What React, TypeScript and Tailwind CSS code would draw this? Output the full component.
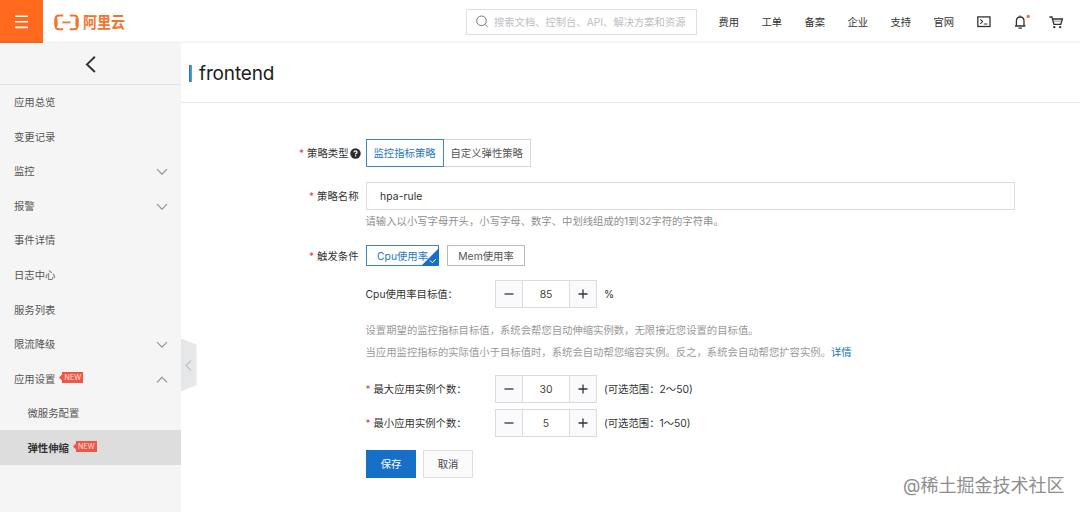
import React from "react";

const navLinks = ["费用", "工单", "备案", "企业", "支持", "官网"];

type Item = { label: string; arrow?: "up" | "down"; isNew?: boolean; child?: boolean; active?: boolean };

const menu: Item[] = [
  { label: "应用总览" },
  { label: "变更记录" },
  { label: "监控", arrow: "down" },
  { label: "报警", arrow: "down" },
  { label: "事件详情" },
  { label: "日志中心" },
  { label: "服务列表" },
  { label: "限流降级", arrow: "down" },
  { label: "应用设置", arrow: "up", isNew: true },
  { label: "微服务配置", child: true },
  { label: "弹性伸缩", child: true, active: true, isNew: true },
];

function Chevron({ dir }: { dir: "up" | "down" }) {
  return (
    <svg className="mt-[2px]" width="12" height="8" viewBox="0 0 12 8" fill="none" stroke="#8f8f8f" strokeWidth="1.1">
      <path d={dir === "down" ? "M1 1.2L6 6.2L11 1.2" : "M1 6.4L6 1.4L11 6.4"} />
    </svg>
  );
}

function NewBadge() {
  return (
    <span className="relative -top-[1px] ml-[4px] flex h-[11px] items-center">
      <svg width="3" height="11" viewBox="0 0 3 11">
        <path d="M3 2.5L0 5.5L3 8.5Z" fill="#ee5648" />
      </svg>
      <span className="flex h-[11px] w-[21px] items-center justify-center bg-[#ee5648] text-[7px] leading-none tracking-[0.1px] text-[#ffe3df]">
        NEW
      </span>
    </span>
  );
}

function Star() {
  return <span className="mr-[3px] text-[10px] text-[#e0405a]">*</span>;
}

function Stepper({ value }: { value: string }) {
  return (
    <div className="flex h-[28px] w-[102px] border border-[#dcdcde] text-[#333]">
      <button className="flex w-[27px] items-center justify-center border-r border-[#dcdcde] bg-[#faf9fb]">
        <svg width="10" height="10" viewBox="0 0 10 10" stroke="#333" strokeWidth="1.3">
          <path d="M0.5 5H9.5" />
        </svg>
      </button>
      <span className="flex flex-1 items-center justify-center pt-[2px] text-[10.4px] text-[#444]">{value}</span>
      <button className="flex w-[27px] items-center justify-center border-l border-[#dcdcde] bg-[#faf9fb]">
        <svg width="10" height="10" viewBox="0 0 10 10" stroke="#333" strokeWidth="1.3">
          <path d="M0.5 5H9.5M5 0.5V9.5" />
        </svg>
      </button>
    </div>
  );
}

function Header() {
  return (
    <header className="flex h-[43px] shrink-0 items-center bg-white">
      <div className="flex h-[43px] w-[43px] shrink-0 items-center justify-center bg-[#ff6a1f]">
        <svg width="13" height="14" viewBox="0 0 13 14" stroke="#fff" strokeWidth="1.6">
          <path d="M0 1.2H13M0 6.8H13M0 12.4H13" />
        </svg>
      </div>
      <svg className="mt-[2px] ml-[11px] shrink-0" width="25" height="17" viewBox="0 0 25 17" fill="none" stroke="#f4742f">
        <path d="M9.2 1.6H5Q1.6 1.6 1.6 5V12Q1.6 15.2 5 15.2H9.2" strokeWidth="2" />
        <path d="M15.8 1.6H20Q23.4 1.6 23.4 5V12Q23.4 15.2 20 15.2H15.8" strokeWidth="2" />
        <path d="M2 4.5V12.3M23 4.5V12.3" strokeWidth="3.2" />
        <path d="M8.4 8.4H16.6" strokeWidth="1.8" />
      </svg>
      <span className="mt-[2px] ml-[4px] w-[374px] shrink-0 origin-left scale-x-[0.9] text-[15.6px] leading-none font-bold text-[#f4742f]">阿里云</span>
      <div className="ml-[9px] flex h-[26px] w-[231px] shrink-0 items-center border border-[#dfdfe2] pl-[9px]">
        <svg width="12" height="13" viewBox="0 0 12 13" fill="none" stroke="#777" strokeWidth="1">
          <circle cx="5.5" cy="5.8" r="4.8" />
          <path d="M9 9.4L11.4 11.8" />
        </svg>
        <span className="ml-[6px] text-[10.3px] whitespace-nowrap text-[#bdbdbf]">搜索文档、控制台、API、解决方案和资源</span>
      </div>
      <nav className="ml-[21.5px] flex gap-[22.4px] text-[10.3px] whitespace-nowrap text-[#333]">
        {navLinks.map((t) => (
          <a key={t} className="w-[20.6px]">{t}</a>
        ))}
      </nav>
      <svg className="ml-[23px] mt-px shrink-0" width="14" height="12" viewBox="0 0 14 12" fill="none" stroke="#333" strokeWidth="1.3">
        <rect x="0.8" y="0.9" width="12.2" height="9.6" />
        <path d="M3.3 3.4L5.6 5.6L3.3 7.8M6.8 8H10.4" strokeWidth="1.1" />
      </svg>
      <svg className="ml-[23px] shrink-0" width="17" height="17" viewBox="0 0 17 17" fill="none" stroke="#333" strokeWidth="1.3">
        <path d="M1 13H11.4M2.4 12.8V8Q2.4 4 6.2 4Q10 4 10 8V12.8M6.2 3.8V2.4M4.4 15.2H8" />
        <circle cx="14.2" cy="3.4" r="1.7" fill="#e0713c" stroke="none" />
      </svg>
      <svg className="ml-[18px] mt-[2px] shrink-0" width="15" height="13" viewBox="0 0 15 13" fill="none" stroke="#333" strokeWidth="1.3">
        <path d="M0.4 1H2.9L4.9 8.4H11.8L13.4 3H3.6" />
        <path d="M4 5.2H12.4" strokeWidth="0.5" />
        <circle cx="5.3" cy="11.1" r="1.2" fill="#333" stroke="none" />
        <circle cx="11.2" cy="11.1" r="1.2" fill="#333" stroke="none" />
      </svg>
    </header>
  );
}

function Sidebar() {
  return (
    <aside className="flex w-[181px] shrink-0 flex-col bg-[#f5f5f5]">
      <div className="flex h-[42px] shrink-0 items-center justify-center border-b border-[#e3e4e6]">
        <svg width="12" height="18" viewBox="0 0 12 18" fill="none" stroke="#333" strokeWidth="2">
          <path d="M9.9 1.8L2 9.4L9.9 17" />
        </svg>
      </div>
      {menu.map((m) => (
        <div
          key={m.label}
          className={`flex h-[34.55px] shrink-0 items-center pr-[13px] ${m.child ? "pl-[27.5px]" : "pl-[14px]"} ${
            m.active ? "bg-[#dedddd] font-bold text-[#333]" : "text-[#555]"
          }`}
        >
          <span>{m.label}</span>
          {m.isNew && <span className="font-normal"><NewBadge /></span>}
          {m.arrow && <span className="ml-auto"><Chevron dir={m.arrow} /></span>}
        </div>
      ))}
    </aside>
  );
}

function Label({ children, wide }: { children: React.ReactNode; wide?: boolean }) {
  return (
    <div className={`flex shrink-0 items-center justify-end whitespace-nowrap ${wide ? "w-[179.5px] mr-[5.5px]" : "w-[177.5px] mr-[7.5px]"}`}>
      <Star />
      {children}
    </div>
  );
}

export default function App() {
  return (
    <div className="relative flex h-[512px] w-[1080px] flex-col overflow-hidden bg-white font-['Inter','Noto_Sans_CJK_SC',sans-serif] text-[10.35px] leading-[16px] text-[#333]">
      <Header />
      <div className="flex min-h-0 flex-1 shadow-[0_-1px_2px_rgba(0,0,0,0.08)]">
        <Sidebar />
        <main className="min-w-0 flex-1 bg-white">
          <div className="flex h-[60px] items-center border-b border-[#e6e7ec] pt-[2px] pl-[8px]">
            <span className="h-[17px] w-[3px] bg-linear-to-r from-[#2a6fb5] to-[#5ba6e0]" />
            <h1 className="mt-[1px] ml-[7px] text-[19px] leading-[28px] tracking-[-0.15px] text-[#1c1c1c]">frontend</h1>
          </div>

          <div className="mt-[36px] flex h-[28px]">
            <Label wide>
              策略类型
              <svg className="ml-[1px]" width="11" height="11" viewBox="0 0 11 11">
                <circle cx="5.5" cy="5.5" r="5.2" fill="#2b2b2b" />
                <path d="M3.9 4.3Q4 2.9 5.5 2.9Q7.1 2.9 7.1 4.2Q7.1 5 6.2 5.4Q5.6 5.7 5.6 6.4M5.6 7.3V8.4" fill="none" stroke="#fff" strokeWidth="1.2" />
              </svg>
            </Label>
            <div className="flex w-[78px] items-center border border-[#3f86c4] pl-[6.5px] text-[#2878be]">监控指标策略</div>
            <div className="flex w-[87px] items-center border border-l-0 border-[#d6d6d8] pl-[6.5px] text-[#555]">自定义弹性策略</div>
          </div>

          <div className="mt-[15px] flex h-[28px]">
            <Label>策略名称</Label>
            <div className="flex w-[649px] items-center border border-[#dedee0] pl-[13px] tracking-[0.1px]">hpa-rule</div>
          </div>
          <p className="mt-[3px] ml-[184.5px] text-[#8f8f8f]">请输入以小写字母开头，小写字母、数字、中划线组成的1到32字符的字符串。</p>

          <div className="mt-[16px] flex h-[21px]">
            <Label>触发条件</Label>
            <div className="relative flex w-[73px] items-center border border-[#3f86c4] pl-[10px] text-[#2878be]">
              <span>Cpu使用率</span>
              <svg className="absolute -right-px -bottom-px" width="18" height="18" viewBox="0 0 18 18">
                <path d="M18 0V18H0Z" fill="#176fc8" />
                <path d="M9 12.4L11.4 14.8L15 11" fill="none" stroke="#fff" strokeWidth="1" />
              </svg>
            </div>
            <div className="ml-[8px] flex w-[78px] items-center justify-center border border-[#b9b9bb] text-[#555]">Mem使用率</div>
          </div>

          <div className="mt-[14px] ml-[184.5px] flex h-[28px] items-center">
            <span className="w-[129.5px]">Cpu使用率目标值：</span>
            <Stepper value="85" />
            <span className="ml-[7px]">%</span>
          </div>

          <p className="mt-[14px] ml-[184.5px] text-[#9a9a9a]">设置期望的监控指标目标值，系统会帮您自动伸缩实例数，无限接近您设置的目标值。</p>
          <p className="mt-[6px] ml-[184.5px] text-[#9a9a9a]">
            当应用监控指标的实际值小于目标值时，系统会自动帮您缩容实例。反之，系统会自动帮您扩容实例。<a className="text-[#1a74c0]">详情</a>
          </p>

          <div className="mt-[15px] ml-[184.5px] flex h-[28px] items-center">
            <span className="flex w-[129.5px]"><Star />最大应用实例个数：</span>
            <Stepper value="30" />
            <span className="ml-[7px]">(可选范围：2～50)</span>
          </div>
          <div className="mt-[6px] ml-[184.5px] flex h-[28px] items-center">
            <span className="flex w-[129.5px]"><Star />最小应用实例个数：</span>
            <Stepper value="5" />
            <span className="ml-[7px]">(可选范围：1～50)</span>
          </div>

          <div className="mt-[13px] ml-[185px] flex gap-[7px]">
            <button className="h-[28px] w-[50px] bg-[#1670c8] text-white">保存</button>
            <button className="h-[28px] w-[50px] border border-[#dedee0] bg-[#fbfbfc] text-[#444]">取消</button>
          </div>
        </main>
      </div>
      <svg className="absolute top-[338px] left-[181px]" width="16" height="54" viewBox="0 0 16 54">
        <path d="M0 0.5L15.5 6.5V47L0 53.5Z" fill="#e6e7e9" />
        <path d="M10 22.5L5 27.5L10 32.5" fill="none" stroke="#a5a6a8" strokeWidth="1" />
      </svg>
      <div className="absolute top-[473px] left-[903px] text-[18px] leading-[26px] whitespace-nowrap text-[#8e8e8e] [text-shadow:1px_1px_0_#ffffff]">@稀土掘金技术社区</div>
    </div>
  );
}
